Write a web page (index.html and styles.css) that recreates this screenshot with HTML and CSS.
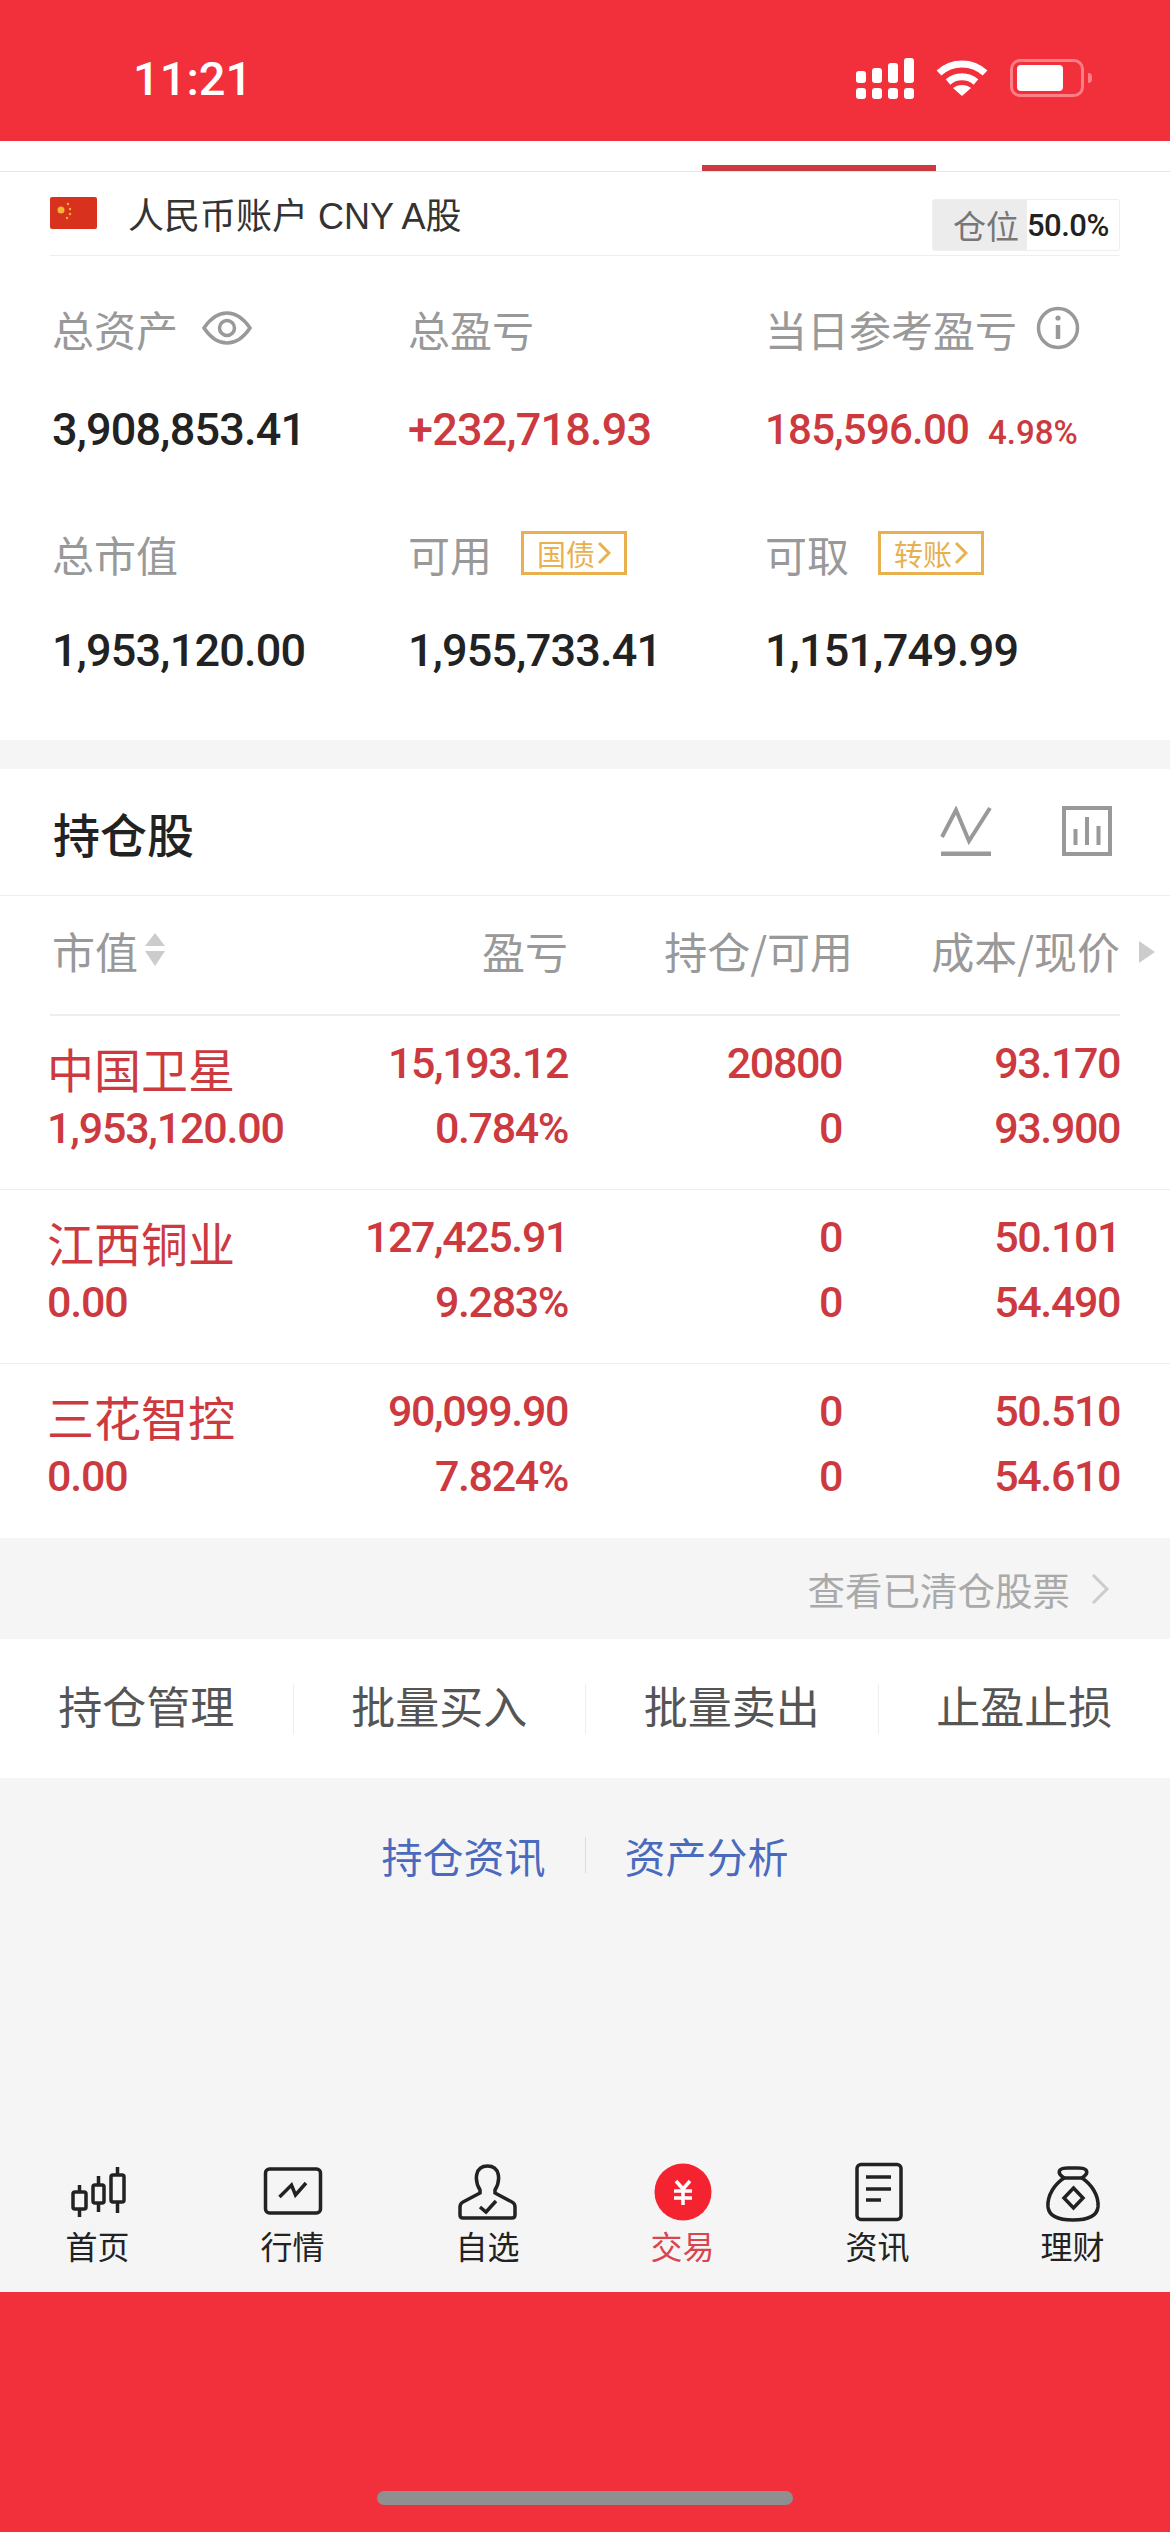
FILE: index.html
```html
<!DOCTYPE html>
<html lang="zh-CN">
  <head>
    <meta charset="UTF-8" />
    <meta name="viewport" content="width=device-width, initial-scale=1.0" />
    <title>持仓</title>
    <link rel="stylesheet" href="styles.css">
  </head>
  <body>
    <div class="phone">
      <div class="status-bar">
        <span class="time">11:21</span>
        <div class="status-icons">
          <svg class="signal" width="58" height="41" viewBox="0 0 58 41" fill="#fff">
            <rect x="0" y="13" width="10" height="12" rx="3" />
            <rect x="16" y="10" width="10" height="15" rx="3" />
            <rect x="32" y="5" width="10" height="20" rx="3" />
            <rect x="48" y="0" width="10" height="25" rx="3" />
            <rect x="0" y="30" width="10" height="11" rx="3" />
            <rect x="16" y="30" width="10" height="11" rx="3" />
            <rect x="32" y="30" width="10" height="11" rx="3" />
            <rect x="48" y="30" width="10" height="11" rx="3" />
          </svg>
          <svg class="wifi" width="52" height="38" viewBox="0 0 52 38" fill="none" stroke="#fff" stroke-width="7">
            <path d="M3 14C16 2 36 2 49 14" />
            <path d="M12 23C20 16 32 16 40 23" />
            <path d="M17 29L26 37L35 29C30 25 22 25 17 29Z" fill="#fff" stroke="none" />
          </svg>
          <div class="battery"><div class="battery-fill"></div></div>
          <div class="battery-nub"></div>
        </div>
      </div>

      <div class="tabs">
        <div class="tab"></div>
        <div class="tab"></div>
        <div class="tab"></div>
        <div class="tab active"></div>
        <div class="tab"></div>
      </div>

      <div class="account">
        <div class="account-name">
          <svg width="47" height="32" viewBox="0 0 47 32">
            <rect width="47" height="32" rx="2" fill="#d8321e" />
            <circle cx="11" cy="13" r="3.5" fill="#f2b632" />
            <circle cx="18" cy="7" r="1.2" fill="#f2b632" />
            <circle cx="20" cy="12" r="1.2" fill="#f2b632" />
            <circle cx="20" cy="17" r="1.2" fill="#f2b632" />
            <circle cx="17" cy="21" r="1.2" fill="#f2b632" />
          </svg>
          <span>人民币账户 CNY A股</span>
        </div>
        <div class="position">
          <span class="position-label">仓位</span>
          <span class="position-value">50.0%</span>
        </div>
      </div>

      <div class="summary">
        <div class="cell">
          <div class="label">总资产
            <svg class="eye" width="50" height="36" viewBox="0 0 50 36" fill="none" stroke="#999" stroke-width="3.5">
              <path d="M2 18C10 6 18 3 25 3C32 3 40 6 48 18C40 30 32 33 25 33C18 33 10 30 2 18Z" />
              <circle cx="25" cy="18" r="7.5" />
            </svg>
          </div>
          <div class="value">3,908,853.41</div>
        </div>
        <div class="cell">
          <div class="label">总盈亏</div>
          <div class="value red">+232,718.93</div>
        </div>
        <div class="cell">
          <div class="label">当日参考盈亏
            <svg class="info" width="44" height="44" viewBox="0 0 44 44" fill="none" stroke="#999" stroke-width="3.5">
              <circle cx="22" cy="22" r="19.5" />
              <path d="M22 19V33" stroke-width="4.5" />
              <circle cx="22" cy="12" r="2.6" fill="#999" stroke="none" />
            </svg>
          </div>
          <div class="value red day">185,596.00<span class="percent">4.98%</span></div>
        </div>
        <div class="cell second">
          <div class="label">总市值</div>
          <div class="value">1,953,120.00</div>
        </div>
        <div class="cell second">
          <div class="label">可用<span class="tag">国债<svg width="14" height="24" viewBox="0 0 14 24" fill="none" stroke="#e8b04f" stroke-width="3"><path d="M2 2L12 12L2 22" /></svg></span></div>
          <div class="value">1,955,733.41</div>
        </div>
        <div class="cell second">
          <div class="label">可取<span class="tag">转账<svg width="14" height="24" viewBox="0 0 14 24" fill="none" stroke="#e8b04f" stroke-width="3"><path d="M2 2L12 12L2 22" /></svg></span></div>
          <div class="value">1,151,749.99</div>
        </div>
      </div>

      <div class="holdings">
        <div class="holdings-title">
          <h2>持仓股</h2>
          <div class="holdings-icons">
            <svg width="52" height="50" viewBox="0 0 52 50" fill="none" stroke="#999" stroke-width="4">
              <path d="M2 31L16 4L29 35L50 2" />
              <path d="M1 48H51" stroke-width="5" />
            </svg>
            <svg width="50" height="50" viewBox="0 0 50 50" fill="none" stroke="#999" stroke-width="4">
              <rect x="2" y="2" width="46" height="46" />
              <path d="M13.500 23V39M25 11V39M36.500 20V39" />
            </svg>
          </div>
        </div>

        <div class="table-head">
          <div class="col-name">市值
            <svg class="sort" width="22" height="34" viewBox="0 0 22 34" fill="#ccc">
              <path d="M11 0L21 13H1Z" />
              <path d="M11 33L21 18H1Z" />
            </svg>
          </div>
          <div class="num">盈亏</div>
          <div class="num">持仓/可用</div>
          <div class="num">成本/现价</div>
          <svg class="more" width="16" height="22" viewBox="0 0 16 22" fill="#ccc"><path d="M0 0L16 11L0 22Z" /></svg>
        </div>

        <div class="stock">
          <div class="stock-name">中国卫星</div>
          <div class="num">15,193.12</div>
          <div class="num">20800</div>
          <div class="num">93.170</div>
          <div class="stock-sub">1,953,120.00</div>
          <div class="num">0.784%</div>
          <div class="num">0</div>
          <div class="num">93.900</div>
        </div>
        <div class="stock">
          <div class="stock-name">江西铜业</div>
          <div class="num">127,425.91</div>
          <div class="num">0</div>
          <div class="num">50.101</div>
          <div class="stock-sub">0.00</div>
          <div class="num">9.283%</div>
          <div class="num">0</div>
          <div class="num">54.490</div>
        </div>
        <div class="stock last">
          <div class="stock-name">三花智控</div>
          <div class="num">90,099.90</div>
          <div class="num">0</div>
          <div class="num">50.510</div>
          <div class="stock-sub">0.00</div>
          <div class="num">7.824%</div>
          <div class="num">0</div>
          <div class="num">54.610</div>
        </div>
      </div>

      <div class="cleared">
        <span>查看已清仓股票</span>
        <svg width="20" height="32" viewBox="0 0 20 32" fill="none" stroke="#ccc" stroke-width="3"><path d="M3 2L17 16L3 30" /></svg>
      </div>

      <div class="actions">
        <div class="action">持仓管理</div>
        <div class="action">批量买入</div>
        <div class="action">批量卖出</div>
        <div class="action">止盈止损</div>
      </div>

      <div class="content-fill">
        <div class="links">
          <span>持仓资讯</span>
          <i class="link-sep"></i>
          <span>资产分析</span>
        </div>
        <nav class="tabbar">
          <div class="tabitem">
            <svg width="60" height="60" viewBox="0 0 60 60" fill="none" stroke="#222" stroke-width="3.500">
              <path d="M11.500 23V30M11.500 47V55M30.500 14V23M30.500 41V50M49.500 5V13M49.500 40V51" />
              <rect x="5" y="30" width="13" height="17" rx="2" />
              <rect x="25" y="23" width="11" height="18" rx="2" />
              <rect x="43" y="13" width="13" height="27" rx="2" />
            </svg>
            <span>首页</span>
          </div>
          <div class="tabitem">
            <svg width="60" height="60" viewBox="0 0 60 60" fill="none" stroke="#222" stroke-width="3.500">
              <rect x="2.500" y="7" width="55" height="44" rx="4" />
              <path d="M16.500 35L28.500 23L32.500 33L43 21" />
            </svg>
            <span>行情</span>
          </div>
          <div class="tabitem">
            <svg width="60" height="60" viewBox="0 0 60 60" fill="none" stroke="#222" stroke-width="3.500">
              <path d="M22 28C16 18 17 4 29.500 4C42 4 43 18 37 28V31L54 40C56 41 57 43 57 45V53C57 55 56 56 54 56H5C3 56 2 55 2 53V45C2 43 3 41 5 40L22 31Z" />
              <path d="M22 45L28 50L38 39" />
            </svg>
            <span>自选</span>
          </div>
          <div class="tabitem active">
            <svg width="60" height="60" viewBox="0 0 60 60" fill="none" stroke="#fff" stroke-width="3.500">
              <circle cx="30" cy="30" r="28.500" fill="#f5222f" stroke="none" />
              <path d="M23 19L30 27L37 19M21 29H39M21 36H39M30 27V43" />
            </svg>
            <span>交易</span>
          </div>
          <div class="tabitem">
            <svg width="60" height="60" viewBox="0 0 60 60" fill="none" stroke="#222" stroke-width="3.500">
              <rect x="9" y="2.500" width="44" height="55" rx="4" />
              <path d="M18 15H43M18 27H43M18 38H33" />
            </svg>
            <span>资讯</span>
          </div>
          <div class="tabitem">
            <svg width="60" height="60" viewBox="0 0 60 60" fill="none" stroke="#222" stroke-width="3.500">
              <path d="M21 16C17 13 15 11 17 8C19 5 25 6 30 6C35 6 41 5 43 8C45 11 43 13 39 16C48 22 56 33 55 45C54 54 46 58 30 58C14 58 6 54 5 45C4 33 12 22 21 16Z" />
              <path d="M21 16H39" />
              <path d="M30.500 26L40 36L30.500 46L21 36Z" />
            </svg>
            <span>理财</span>
          </div>
        </nav>
      </div>

      <div class="home-area">
        <div class="home-indicator"></div>
      </div>
    </div>
  </body>
</html>
```

FILE: styles.css
```css
body {
  margin: 0;
  font-family: "Liberation Sans", "Noto Sans CJK SC", sans-serif;
  background: #fff;
  color: #222;
}
.phone {
  width: 1170px;
  height: 2532px;
  display: flex;
  flex-direction: column;
  overflow: hidden;
}

/* status bar */
.status-bar {
  height: 141px;
  background: #f2303c;
  color: #fff;
  display: flex;
  justify-content: space-between;
  align-items: center;
  padding: 15px 78px 0 133px;
  box-sizing: border-box;
}
.time {
  font-family: Roboto, sans-serif;
  font-size: 47px;
  font-weight: 500;
}
.status-icons {
  display: flex;
  align-items: center;
}
.wifi {
  margin-left: 22px;
}
.battery {
  width: 74px;
  height: 38px;
  margin-left: 22px;
  padding: 3px 4px;
  box-sizing: border-box;
  border: 3px solid #ff7f87;
  border-radius: 10px;
}
.battery-fill {
  width: 46px;
  height: 100%;
  background: #fff;
  border-radius: 4px;
}
.battery-nub {
  width: 4px;
  height: 10px;
  margin-left: 4px;
  background: #ff7f87;
  border-radius: 0 4px 4px 0;
}

/* tabs */
.tabs {
  height: 31px;
  display: grid;
  grid-template-columns: repeat(5, 234px);
  border-bottom: 1px solid #e6e6e6;
  box-sizing: border-box;
}
.tab.active {
  height: 6px;
  margin-top: 24px;
  background: #cc3a3f;
}

/* account row */
.account {
  height: 84px;
  margin: 0 50px;
  display: flex;
  justify-content: space-between;
  align-items: flex-end;
  border-bottom: 1px solid #eee;
  box-sizing: border-box;
}
.account-name {
  align-self: stretch;
  padding-bottom: 2px;
  display: flex;
  align-items: center;
  font-size: 36px;
  color: #333;
}
.account-name svg {
  margin-right: 31px;
}
.position {
  width: 188px;
  height: 52px;
  margin-bottom: 4px;
  display: flex;
  align-items: center;
  background: linear-gradient(90deg, #ececec 94px, #fff 94px);
  border: 1px solid #eee;
  border-radius: 3px;
  box-sizing: border-box;
}
.position-label {
  width: 94px;
  padding-left: 20px;
  box-sizing: border-box;
  font-size: 33px;
  color: #777;
}
.position-value {
  font-family: Roboto, sans-serif;
  font-size: 31px;
  font-weight: 500;
  letter-spacing: -0.5px;
  color: #222;
}

/* asset summary */
.summary {
  padding: 42px 0 59px 52px;
  display: grid;
  grid-template-columns: 356px 357px 1fr;
}
.cell.second {
  padding-top: 63px;
}
.label {
  height: 60px;
  display: flex;
  align-items: center;
  font-size: 42px;
  color: #999;
}
.eye {
  margin-left: 24px;
}
.info {
  margin-left: 19px;
}
.tag {
  width: 106px;
  height: 44px;
  margin-left: 29px;
  display: flex;
  justify-content: center;
  align-items: center;
  gap: 2px;
  box-sizing: border-box;
  border: 3px solid #e8b04f;
  font-size: 29px;
  color: #e8b04f;
}
.value {
  height: 60px;
  margin-top: 42px;
  line-height: 60px;
  font-family: Roboto, sans-serif;
  font-size: 45px;
  font-weight: 500;
  letter-spacing: -0.8px;
  color: #222;
}
.cell.second .value {
  margin-top: 38px;
}
.value.red {
  color: #cc3a3f;
}
.value.day {
  font-size: 42px;
}
.percent {
  margin-left: 19px;
  font-size: 33px;
  letter-spacing: 0;
}

/* holdings */
.holdings {
  background: #fff;
  border-top: 29px solid #f5f5f5;
}
.holdings-title {
  height: 126px;
  padding: 0 58px 0 53px;
  display: flex;
  justify-content: space-between;
  align-items: center;
  border-bottom: 1px solid #eee;
}
.holdings-title h2 {
  margin: 0;
  font-size: 47px;
  font-weight: 500;
  color: #222;
}
.holdings-icons {
  display: flex;
  align-items: center;
  gap: 70px;
  margin-bottom: 2px;
}
.table-head {
  position: relative;
  height: 120px;
  margin: 0 50px;
  padding-bottom: 10px;
  display: grid;
  grid-template-columns: 244px 274px 285px 267px;
  align-items: center;
  border-bottom: 2px solid #eee;
  box-sizing: border-box;
  font-family: "Noto Sans CJK SC", sans-serif;
  font-size: 43px;
  color: #999;
}
.col-name {
  display: flex;
  align-items: center;
  padding-left: 2px;
}
.sort {
  margin-left: 6px;
}
.more {
  position: absolute;
  left: 1089px;
  top: 45px;
}
.num {
  text-align: right;
}
.stock {
  height: 174px;
  padding: 25px 50px 0 47px;
  display: grid;
  grid-template-columns: 247px 274px 274px 278px;
  grid-template-rows: 44px 44px;
  row-gap: 21px;
  border-bottom: 1px solid #eee;
  box-sizing: border-box;
  font-family: Roboto, sans-serif;
  font-size: 43px;
  font-weight: 500;
  line-height: 44px;
  letter-spacing: -1.4px;
  color: #cc3a3f;
}
.stock.last {
  border-bottom: 0;
}
.stock-name {
  font-family: "Noto Sans CJK SC", sans-serif;
  line-height: 54px;
  font-size: 47px;
  font-weight: 400;
  letter-spacing: 0;
  white-space: nowrap;
}
.stock-sub {
  letter-spacing: -1.2px;
  white-space: nowrap;
}

/* cleared link */
.cleared {
  height: 101px;
  padding: 0 60px 0 0;
  background: #f5f5f5;
  display: flex;
  justify-content: flex-end;
  align-items: center;
  gap: 20px;
  box-sizing: border-box;
  font-size: 37.5px;
  color: #aaa;
}

/* action buttons */
.actions {
  height: 139px;
  display: grid;
  grid-template-columns: repeat(4, 1fr);
  align-items: center;
  background: #fff;
}
.action {
  height: 50px;
  line-height: 50px;
  text-align: center;
  font-size: 44px;
  color: #555;
  border-left: 1px solid #eee;
}
.action:first-child {
  border-left: 0;
}

/* lower area */
.content-fill {
  flex: 1;
  display: flex;
  flex-direction: column;
  justify-content: space-between;
  background: #f5f5f5;
}
.links {
  margin-top: 47px;
  display: flex;
  justify-content: center;
  align-items: center;
  gap: 39px;
  font-size: 41px;
  color: #4a6bbd;
}
.link-sep {
  width: 1px;
  height: 36px;
  background: #ddd;
}
.tabbar {
  padding-bottom: 21px;
  display: grid;
  grid-template-columns: repeat(6, 195px);
}
.tabitem {
  display: flex;
  flex-direction: column;
  align-items: center;
  font-size: 32px;
  line-height: 46px;
  color: #222;
}
.tabitem.active {
  color: #d9454f;
}
.tabitem svg {
  margin-bottom: 3px;
}
.home-area {
  height: 240px;
  background: #f2303c;
  display: flex;
  justify-content: center;
  align-items: flex-end;
}
.home-indicator {
  width: 416px;
  height: 14px;
  margin-bottom: 27px;
  border-radius: 7px;
  background: #8f8f8f;
}
```
